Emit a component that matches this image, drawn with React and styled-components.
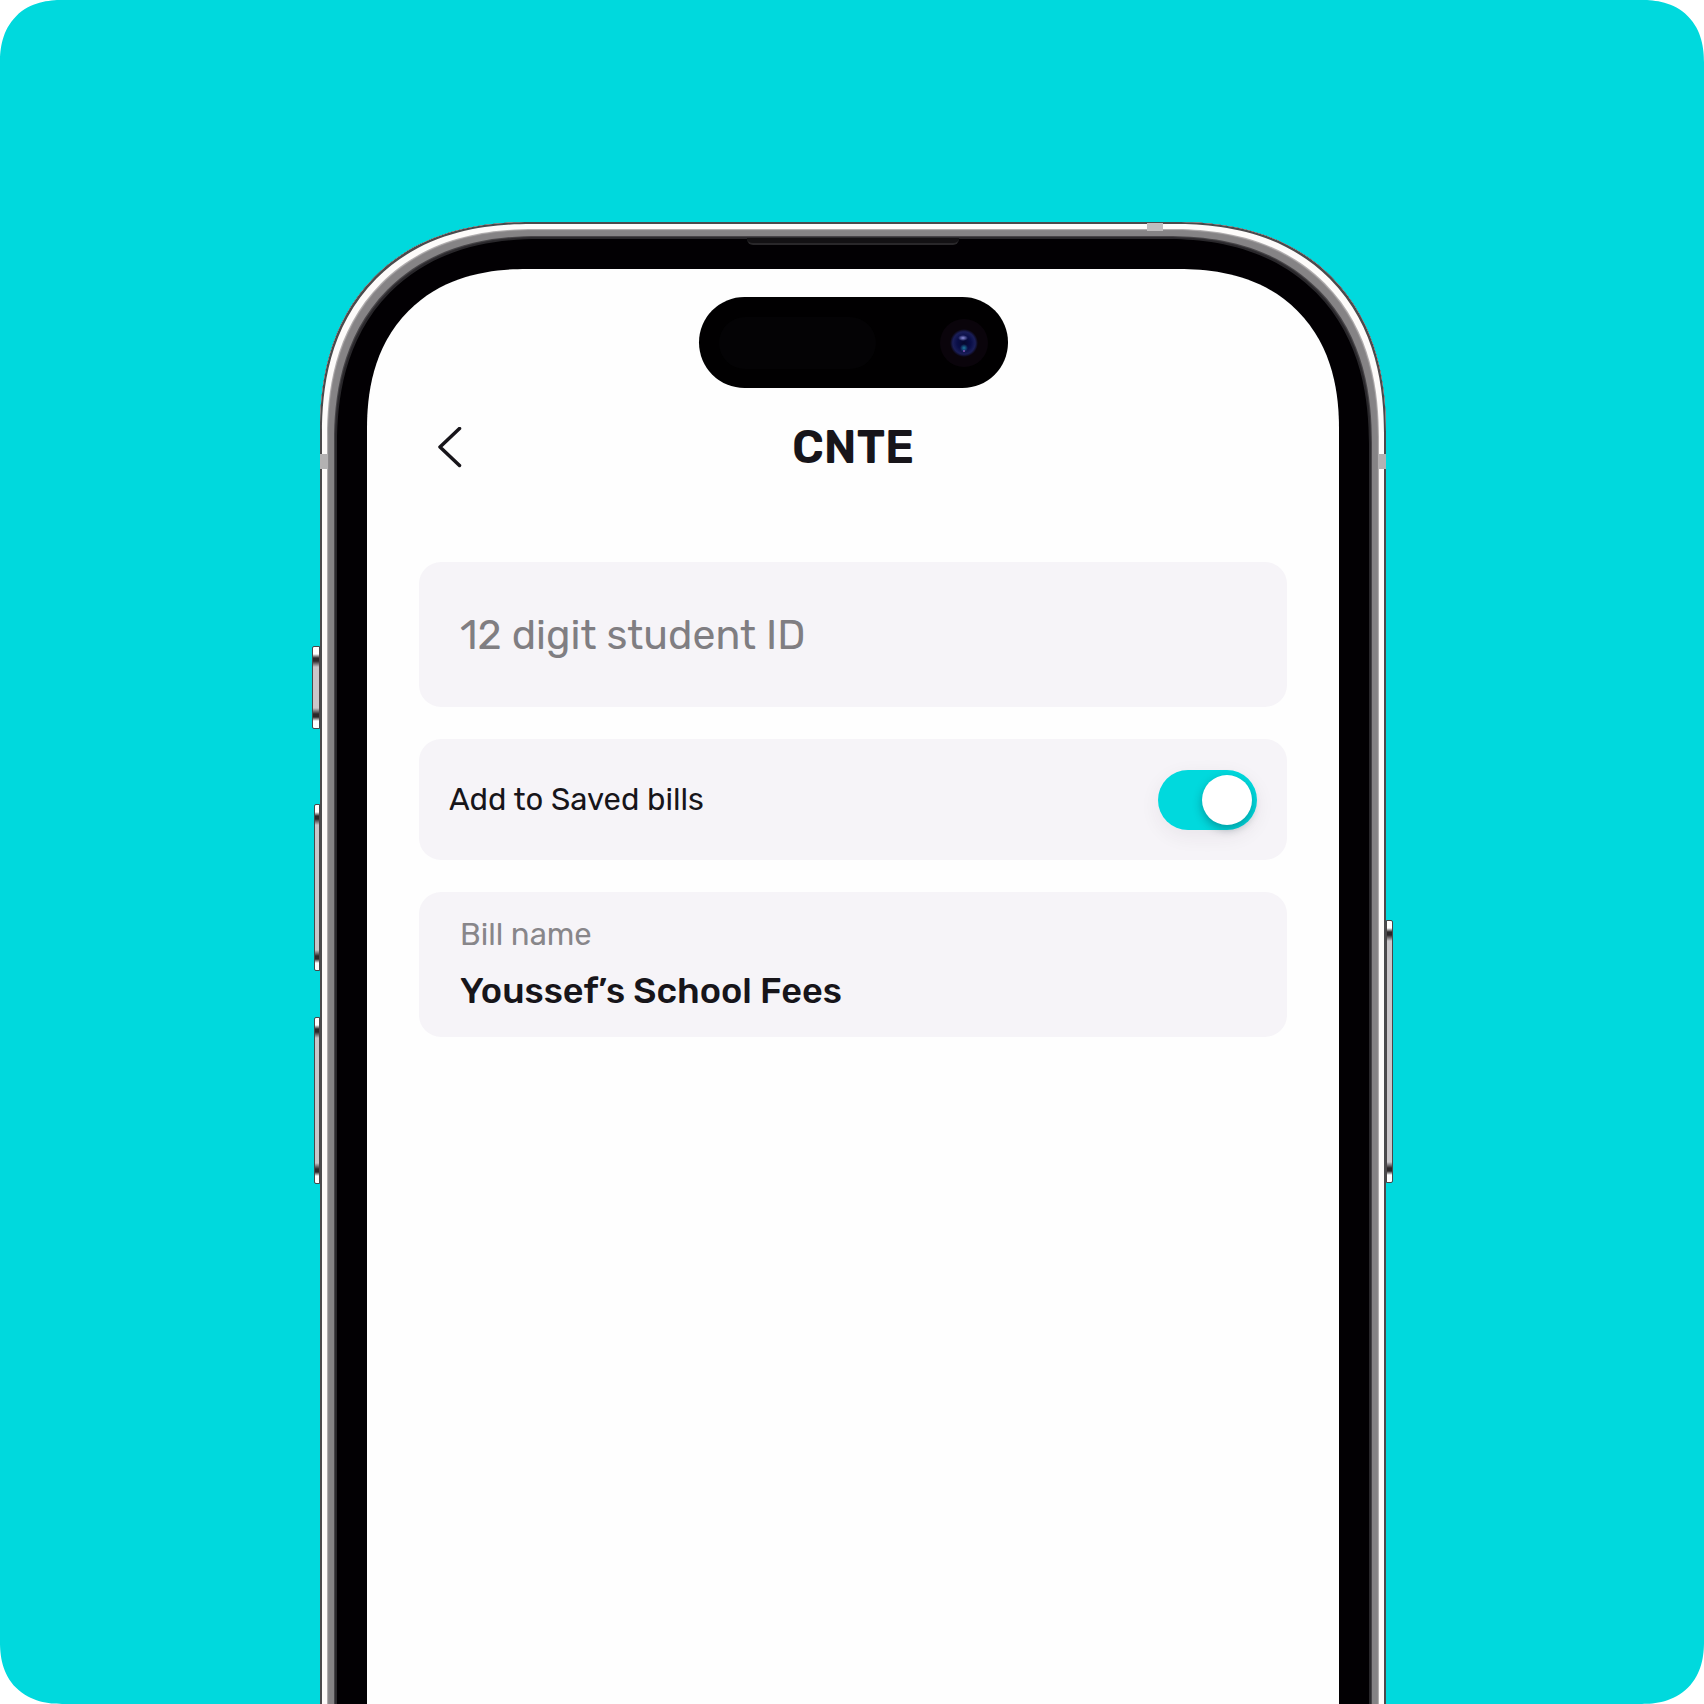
import React, { useState } from 'react';
import styled, { createGlobalStyle } from 'styled-components';

const GlobalStyle = createGlobalStyle`
  * {
    box-sizing: border-box;
  }
  body {
    margin: 0;
    background: #fff;
    color: #17151a;
    font-family: Rubik, Roboto, "Liberation Sans", sans-serif;
  }
`;

const Stage = styled.main`
  display: flex;
  flex-direction: column;
  align-items: center;
  min-height: 100vh;
  padding: 222px 0 0 2px;
  overflow: hidden;
  border-radius: 54px;
  background: #00d9dd;
  @supports (corner-shape: superellipse(1.2)) {
    border-radius: 62px;
    corner-shape: superellipse(1.2);
  }
`;

/* runs past the bottom edge of the stage, which cuts it off */
const Phone = styled.div`
  position: relative;
  display: flex;
  flex: 1 0 auto;
  width: 100%;
  max-width: 1066px;
  margin-bottom: -240px;
  padding: 47px;
  border-radius: 180px;
  background: #020003;
  box-shadow:
    inset 0 0 0 2px #4b4a4c,
    inset 0 0 0 7px #fdfbfa,
    inset 0 0 1px 8px #b5b2b3,
    inset 0 0 0 14px #858385,
    inset 0 0 1px 15px #4a484b,
    inset 0 0 0 17px #29272b;
  @supports (corner-shape: superellipse(1.2)) {
    border-radius: 210px;
    corner-shape: superellipse(1.2);
  }
`;

const Screen = styled.div`
  flex: 1;
  min-width: 0;
  padding: 28px 52px 240px;
  border-radius: 133px;
  background: #fefefe;
  @supports (corner-shape: superellipse(1.2)) {
    border-radius: 160px;
    corner-shape: superellipse(1.2);
  }
`;

const SideKey = styled.span`
  position: absolute;
  top: ${(p) => p.$top}px;
  ${(p) => p.$side}: -${(p) => p.$depth}px;
  width: ${(p) => p.$depth}px;
  height: ${(p) => p.$length}px;
  border: 1px solid #4a4648;
  border-radius: ${(p) => (p.$side === 'left' ? '2px 0 0 2px' : '0 2px 2px 0')};
  background: linear-gradient(
    #fff 0 7px,
    #2b2729 11px 14px,
    #c9c6c9 20px calc(100% - 20px),
    #2b2729 calc(100% - 14px) calc(100% - 11px),
    #fff calc(100% - 7px)
  );
`;

const SideBand = styled.span`
  position: absolute;
  top: 232px;
  ${(p) => p.$side}: 0;
  width: 8px;
  height: 15px;
  background: #b3b1b2;
`;

const TopBand = styled.span`
  position: absolute;
  top: 1px;
  right: 223px;
  width: 16px;
  height: 8px;
  background: #bfbdbe;
`;

const Speaker = styled.span`
  position: absolute;
  top: 16px;
  left: 50%;
  width: 212px;
  height: 7px;
  margin-left: -106px;
  border-bottom: 2px solid #29272a;
  border-radius: 0 0 6px 6px;
  background: #131114;
`;

const Island = styled.div`
  display: flex;
  align-items: center;
  justify-content: space-between;
  width: 309px;
  height: 91px;
  margin: 0 auto;
  padding: 0 20px;
  border-radius: 46px;
  background: #010001;
`;

const Sensor = styled.span`
  width: 157px;
  height: 52px;
  border-radius: 26px;
  background: #040305;
`;

const Header = styled.header`
  display: grid;
  grid-template-columns: 62px 1fr 62px;
  align-items: center;
  height: 52px;
  margin: 34px 0 88px;
`;

const BackButton = styled.button`
  display: flex;
  align-items: center;
  justify-content: center;
  height: 52px;
  padding: 0;
  border: 0;
  background: none;
  color: inherit;
  cursor: pointer;
`;

const Title = styled.h1`
  margin: 0;
  font-size: 46px;
  font-weight: 600;
  line-height: 52px;
  text-align: center;
`;

const Form = styled.form`
  display: flex;
  flex-direction: column;
  gap: 32px;
`;

const Card = styled.div`
  display: flex;
  flex-direction: ${(p) => (p.$stacked ? 'column' : 'row')};
  align-items: ${(p) => (p.$stacked ? 'stretch' : 'center')};
  justify-content: ${(p) => (p.$stacked ? 'center' : 'space-between')};
  min-height: ${(p) => (p.$short ? 121 : 145)}px;
  padding: 0 ${(p) => (p.$short ? 30 : 41)}px;
  border-radius: 22px;
  background: #f6f4f8;
`;

const Input = styled.input`
  width: 100%;
  padding: 0;
  border: 0;
  outline: 0;
  background: none;
  color: #17151a;
  font-family: inherit;
  font-size: ${(p) => (p.$bold ? 36 : 41)}px;
  font-weight: ${(p) => (p.$bold ? 500 : 400)};
  line-height: 48px;
  &::placeholder {
    color: #807e82;
    opacity: 1;
  }
`;

const Label = styled.label`
  color: ${(p) => (p.$muted ? '#88868a' : '#17151a')};
  font-size: 31px;
  line-height: 41px;
`;

const FieldLabel = styled(Label)`
  margin-bottom: 12px;
`;

const Switch = styled.input`
  flex: none;
  display: flex;
  align-items: center;
  justify-content: ${(p) => (p.checked ? 'flex-end' : 'flex-start')};
  width: 99px;
  height: 60px;
  margin: 0;
  padding: 0 5px;
  border-radius: 30px;
  appearance: none;
  background: ${(p) => (p.checked ? '#00d9dd' : '#c9c6cc')};
  box-shadow: 0 6px 20px rgba(60, 40, 60, 0.07);
  cursor: pointer;
  &::before {
    content: '';
    width: 50px;
    height: 50px;
    border-radius: 50%;
    background: #fff;
    box-shadow: 0 4px 10px rgba(0, 40, 50, 0.35);
  }
`;

const Camera = () => (
  <svg width="48" height="48" viewBox="0 0 48 48" aria-hidden="true">
    <defs>
      <radialGradient id="lens">
        <stop offset="0" stopColor="#05082e" />
        <stop offset="0.5" stopColor="#0a0e48" />
        <stop offset="0.8" stopColor="#1a1e58" />
        <stop offset="1" stopColor="#0a040b" />
      </radialGradient>
      <radialGradient id="glare">
        <stop offset="0" stopColor="#8c8edc" />
        <stop offset="1" stopColor="#8c8edc" stopOpacity="0" />
      </radialGradient>
      <radialGradient id="reflex">
        <stop offset="0" stopColor="#1c7aa0" />
        <stop offset="1" stopColor="#1c7aa0" stopOpacity="0" />
      </radialGradient>
    </defs>
    <circle cx="24" cy="24" r="24" fill="#0a040b" />
    <circle cx="24" cy="24" r="14" fill="url(#lens)" />
    <ellipse cx="23" cy="19" rx="5" ry="3" fill="url(#glare)" />
    <circle cx="24" cy="29" r="4" fill="url(#reflex)" />
    <circle cx="24" cy="32" r="1" fill="#8a55b8" />
  </svg>
);

const Chevron = () => (
  <svg width="26" height="42" viewBox="0 0 26 42" fill="none" aria-hidden="true">
    <path
      d="M22.5 1.5 3 20l19.500 18.500"
      stroke="currentColor"
      strokeWidth="3.500"
      strokeLinecap="round"
      strokeLinejoin="round"
    />
  </svg>
);

export default function App() {
  const [studentId, setStudentId] = useState('');
  const [saved, setSaved] = useState(true);
  const [billName, setBillName] = useState('Youssef’s School Fees');

  return (
    <>
      <GlobalStyle />
      <Stage>
        <Phone>
          <SideKey $side="left" $top={424} $length={83} $depth={8} />
          <SideKey $side="left" $top={582} $length={167} $depth={6} />
          <SideKey $side="left" $top={795} $length={167} $depth={6} />
          <SideKey $side="right" $top={698} $length={263} $depth={7} />
          <SideBand $side="left" />
          <SideBand $side="right" />
          <TopBand />
          <Speaker />
          <Screen>
            <Island>
              <Sensor />
              <Camera />
            </Island>
            <Header>
              <BackButton type="button" aria-label="Back">
                <Chevron />
              </BackButton>
              <Title>CNTE</Title>
            </Header>
            <Form onSubmit={(e) => e.preventDefault()}>
              <Card>
                <Input
                  aria-label="12 digit student ID"
                  placeholder="12 digit student ID"
                  inputMode="numeric"
                  maxLength={12}
                  value={studentId}
                  onChange={(e) => setStudentId(e.target.value)}
                />
              </Card>
              <Card $short>
                <Label htmlFor="saved">Add to Saved bills</Label>
                <Switch
                  id="saved"
                  type="checkbox"
                  role="switch"
                  checked={saved}
                  onChange={(e) => setSaved(e.target.checked)}
                />
              </Card>
              <Card $stacked>
                <FieldLabel htmlFor="bill-name" $muted>
                  Bill name
                </FieldLabel>
                <Input
                  id="bill-name"
                  $bold
                  value={billName}
                  onChange={(e) => setBillName(e.target.value)}
                />
              </Card>
            </Form>
          </Screen>
        </Phone>
      </Stage>
    </>
  );
}
